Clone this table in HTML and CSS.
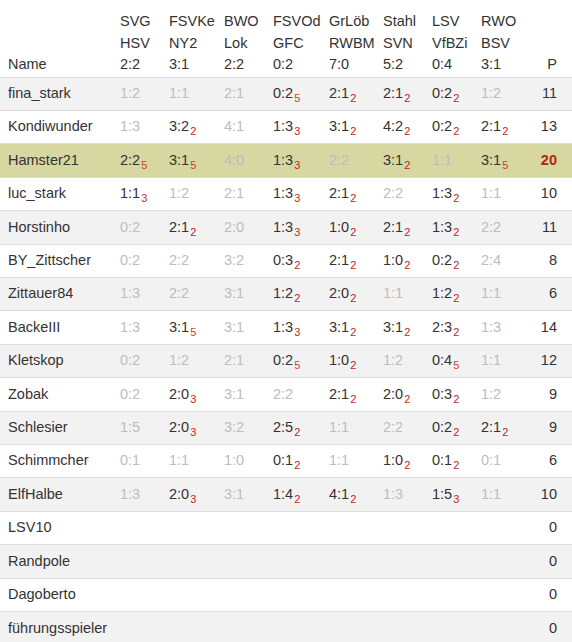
FILE: index.html
```html
<!DOCTYPE html>
<html lang="de">
<head>
<meta charset="utf-8">
<title>Tipptabelle</title>
<link rel="stylesheet" href="styles.css">
</head>
<body>
<table class="tips">
  <colgroup>
    <col class="c-name"><col class="c-49"><col class="c-55"><col class="c-49"><col class="c-56"><col class="c-54"><col class="c-49"><col class="c-49"><col class="c-49"><col class="c-pts">
  </colgroup>
  <thead>
    <tr>
      <th>Name</th>
      <th>SVG<br>HSV<br>2:2</th>
      <th>FSVKe<br>NY2<br>3:1</th>
      <th>BWO<br>Lok<br>2:2</th>
      <th>FSVOd<br>GFC<br>0:2</th>
      <th>GrLöb<br>RWBM<br>7:0</th>
      <th>Stahl<br>SVN<br>5:2</th>
      <th>LSV<br>VfBZi<br>0:4</th>
      <th>RWO<br>BSV<br>3:1</th>
      <th class="pts">P</th>
    </tr>
  </thead>
  <tbody>
    <tr><td>fina_stark</td><td class="g">1:2</td><td class="g">1:1</td><td class="g">2:1</td><td>0:2<sub class="p5">5</sub></td><td>2:1<sub class="p2">2</sub></td><td>2:1<sub class="p2">2</sub></td><td>0:2<sub class="p2">2</sub></td><td class="g">1:2</td><td class="pts">11</td></tr>
    <tr><td>Kondiwunder</td><td class="g">1:3</td><td>3:2<sub class="p2">2</sub></td><td class="g">4:1</td><td>1:3<sub class="p3">3</sub></td><td>3:1<sub class="p2">2</sub></td><td>4:2<sub class="p2">2</sub></td><td>0:2<sub class="p2">2</sub></td><td>2:1<sub class="p2">2</sub></td><td class="pts">13</td></tr>
    <tr class="me"><td>Hamster21</td><td>2:2<sub class="p5">5</sub></td><td>3:1<sub class="p5">5</sub></td><td class="g">4:0</td><td>1:3<sub class="p3">3</sub></td><td class="g">2:2</td><td>3:1<sub class="p2">2</sub></td><td class="g">1:1</td><td>3:1<sub class="p5">5</sub></td><td class="pts top">20</td></tr>
    <tr><td>luc_stark</td><td>1:1<sub class="p3">3</sub></td><td class="g">1:2</td><td class="g">2:1</td><td>1:3<sub class="p3">3</sub></td><td>2:1<sub class="p2">2</sub></td><td class="g">2:2</td><td>1:3<sub class="p2">2</sub></td><td class="g">1:1</td><td class="pts">10</td></tr>
    <tr><td>Horstinho</td><td class="g">0:2</td><td>2:1<sub class="p2">2</sub></td><td class="g">2:0</td><td>1:3<sub class="p3">3</sub></td><td>1:0<sub class="p2">2</sub></td><td>2:1<sub class="p2">2</sub></td><td>1:3<sub class="p2">2</sub></td><td class="g">2:2</td><td class="pts">11</td></tr>
    <tr><td>BY_Zittscher</td><td class="g">0:2</td><td class="g">2:2</td><td class="g">3:2</td><td>0:3<sub class="p2">2</sub></td><td>2:1<sub class="p2">2</sub></td><td>1:0<sub class="p2">2</sub></td><td>0:2<sub class="p2">2</sub></td><td class="g">2:4</td><td class="pts">8</td></tr>
    <tr><td>Zittauer84</td><td class="g">1:3</td><td class="g">2:2</td><td class="g">3:1</td><td>1:2<sub class="p2">2</sub></td><td>2:0<sub class="p2">2</sub></td><td class="g">1:1</td><td>1:2<sub class="p2">2</sub></td><td class="g">1:1</td><td class="pts">6</td></tr>
    <tr><td>BackeIII</td><td class="g">1:3</td><td>3:1<sub class="p5">5</sub></td><td class="g">3:1</td><td>1:3<sub class="p3">3</sub></td><td>3:1<sub class="p2">2</sub></td><td>3:1<sub class="p2">2</sub></td><td>2:3<sub class="p2">2</sub></td><td class="g">1:3</td><td class="pts">14</td></tr>
    <tr><td>Kletskop</td><td class="g">0:2</td><td class="g">1:2</td><td class="g">2:1</td><td>0:2<sub class="p5">5</sub></td><td>1:0<sub class="p2">2</sub></td><td class="g">1:2</td><td>0:4<sub class="p5">5</sub></td><td class="g">1:1</td><td class="pts">12</td></tr>
    <tr><td>Zobak</td><td class="g">0:2</td><td>2:0<sub class="p3">3</sub></td><td class="g">3:1</td><td class="g">2:2</td><td>2:1<sub class="p2">2</sub></td><td>2:0<sub class="p2">2</sub></td><td>0:3<sub class="p2">2</sub></td><td class="g">1:2</td><td class="pts">9</td></tr>
    <tr><td>Schlesier</td><td class="g">1:5</td><td>2:0<sub class="p3">3</sub></td><td class="g">3:2</td><td>2:5<sub class="p2">2</sub></td><td class="g">1:1</td><td class="g">2:2</td><td>0:2<sub class="p2">2</sub></td><td>2:1<sub class="p2">2</sub></td><td class="pts">9</td></tr>
    <tr><td>Schimmcher</td><td class="g">0:1</td><td class="g">1:1</td><td class="g">1:0</td><td>0:1<sub class="p2">2</sub></td><td class="g">1:1</td><td>1:0<sub class="p2">2</sub></td><td>0:1<sub class="p2">2</sub></td><td class="g">0:1</td><td class="pts">6</td></tr>
    <tr><td>ElfHalbe</td><td class="g">1:3</td><td>2:0<sub class="p3">3</sub></td><td class="g">3:1</td><td>1:4<sub class="p2">2</sub></td><td>4:1<sub class="p2">2</sub></td><td class="g">1:3</td><td>1:5<sub class="p3">3</sub></td><td class="g">1:1</td><td class="pts">10</td></tr>
    <tr><td>LSV10</td><td></td><td></td><td></td><td></td><td></td><td></td><td></td><td></td><td class="pts">0</td></tr>
    <tr><td>Randpole</td><td></td><td></td><td></td><td></td><td></td><td></td><td></td><td></td><td class="pts">0</td></tr>
    <tr><td>Dagoberto</td><td></td><td></td><td></td><td></td><td></td><td></td><td></td><td></td><td class="pts">0</td></tr>
    <tr><td>führungsspieler</td><td></td><td></td><td></td><td></td><td></td><td></td><td></td><td></td><td class="pts">0</td></tr>
  </tbody>
</table>
</body>
</html>
```

FILE: styles.css
```css
html, body {
  margin: 0;
  padding: 0;
  background: #fff;
}

body {
  font-family: "Liberation Sans", Arial, sans-serif;
  font-size: 14.5px;
  color: #333;
}

.tips {
  width: 572px;
  table-layout: fixed;
  border-collapse: collapse;
  border-spacing: 0;
}

.c-name { width: 112px; }
.c-49 { width: 49px; }
.c-55 { width: 55px; }
.c-56 { width: 56px; }
.c-54 { width: 54px; }
.c-pts { width: 50px; }

.tips th {
  font-weight: normal;
  text-align: left;
  vertical-align: bottom;
  line-height: 21.5px;
  padding: 11px 8px 1px 8px;
  white-space: nowrap;
  overflow: visible;
  border-bottom: 1px solid #ddd;
}

.tips td {
  line-height: 21.4px;
  padding: 5.5px 8px 5.5px 8px;
  border-top: 1px solid #ddd;
  white-space: nowrap;
  vertical-align: middle;
}

.tips thead + tbody tr:first-child td {
  border-top: 0;
}

.tips tbody tr:nth-child(odd) {
  background: #f2f2f2;
}

.tips tbody tr.me {
  background: #d6d7a1;
}

.tips .pts {
  text-align: right;
  padding-right: 15px;
}

.tips .top {
  font-weight: bold;
  color: #b3260e;
}

.g {
  color: #bdbdbd;
}

.tips sub {
  font-size: 11px;
  line-height: 0;
  vertical-align: -4px;
  margin-left: 1px;
}

.p2 { color: #bb1f1f; }
.p3 { color: #c62a1a; }
.p5 { color: #d9411c; }
```
